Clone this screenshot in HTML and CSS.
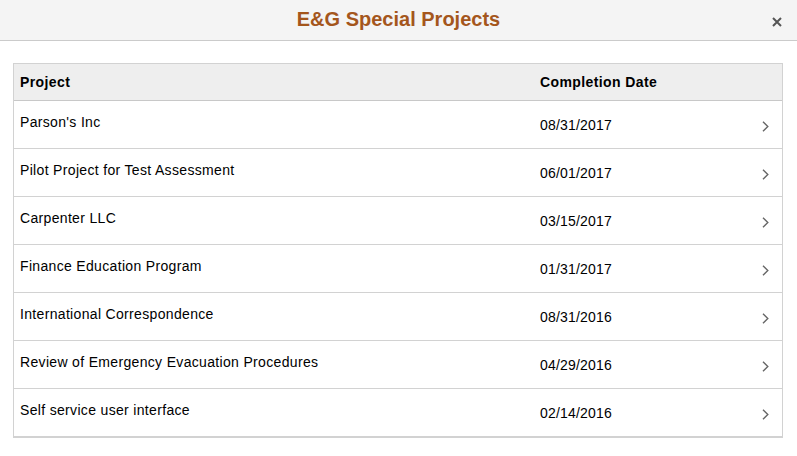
FILE: index.html
```html
<!DOCTYPE html>
<html>
<head>
<meta charset="utf-8">
<title>E&amp;G Special Projects</title>
<link rel="stylesheet" href="styles.css">
</head>
<body>
<header class="modal-header">
  <h1 class="modal-title">E&amp;G Special Projects</h1>
  <button class="close-btn" aria-label="Close">
    <svg width="10" height="10" viewBox="0 0 10 10"><path d="M1 1 L9 9 M9 1 L1 9" stroke="#555" stroke-width="2" fill="none"/></svg>
  </button>
</header>
<main class="content">
  <div class="grid">
    <div class="row head">
      <div class="cell project">Project</div>
      <div class="cell date">Completion Date</div>
      <div class="cell chev"></div>
    </div>
    <div class="row">
      <div class="cell project">Parson's Inc</div>
      <div class="cell date">08/31/2017</div>
      <div class="cell chev"><svg width="7" height="11" viewBox="0 0 7 11"><path d="M1 0.8 L5.8 5.5 L1 10.2" stroke="#666" stroke-width="1.4" fill="none"/></svg></div>
    </div>
    <div class="row">
      <div class="cell project">Pilot Project for Test Assessment</div>
      <div class="cell date">06/01/2017</div>
      <div class="cell chev"><svg width="7" height="11" viewBox="0 0 7 11"><path d="M1 0.8 L5.8 5.5 L1 10.2" stroke="#666" stroke-width="1.4" fill="none"/></svg></div>
    </div>
    <div class="row">
      <div class="cell project">Carpenter LLC</div>
      <div class="cell date">03/15/2017</div>
      <div class="cell chev"><svg width="7" height="11" viewBox="0 0 7 11"><path d="M1 0.8 L5.8 5.5 L1 10.2" stroke="#666" stroke-width="1.4" fill="none"/></svg></div>
    </div>
    <div class="row">
      <div class="cell project">Finance Education Program</div>
      <div class="cell date">01/31/2017</div>
      <div class="cell chev"><svg width="7" height="11" viewBox="0 0 7 11"><path d="M1 0.8 L5.8 5.5 L1 10.2" stroke="#666" stroke-width="1.4" fill="none"/></svg></div>
    </div>
    <div class="row">
      <div class="cell project">International Correspondence</div>
      <div class="cell date">08/31/2016</div>
      <div class="cell chev"><svg width="7" height="11" viewBox="0 0 7 11"><path d="M1 0.8 L5.8 5.5 L1 10.2" stroke="#666" stroke-width="1.4" fill="none"/></svg></div>
    </div>
    <div class="row">
      <div class="cell project">Review of Emergency Evacuation Procedures</div>
      <div class="cell date">04/29/2016</div>
      <div class="cell chev"><svg width="7" height="11" viewBox="0 0 7 11"><path d="M1 0.8 L5.8 5.5 L1 10.2" stroke="#666" stroke-width="1.4" fill="none"/></svg></div>
    </div>
    <div class="row">
      <div class="cell project">Self service user interface</div>
      <div class="cell date">02/14/2016</div>
      <div class="cell chev"><svg width="7" height="11" viewBox="0 0 7 11"><path d="M1 0.8 L5.8 5.5 L1 10.2" stroke="#666" stroke-width="1.4" fill="none"/></svg></div>
    </div>
  </div>
</main>
</body>
</html>
```

FILE: styles.css
```css
* { box-sizing: border-box; }
html, body { margin: 0; padding: 0; background: #fff; }
body {
  font-family: "Liberation Sans", Arial, sans-serif;
  font-size: 14px;
  color: #000;
}
.modal-header {
  position: relative;
  height: 41px;
  background: #f4f4f4;
  border-bottom: 1px solid #cbcbcb;
  display: flex;
  justify-content: center;
}
.modal-title {
  margin: 0;
  padding-top: 8px;
  font-size: 20px;
  font-weight: bold;
  line-height: 23px;
  color: #a4561c;
}
.close-btn {
  position: absolute;
  right: 15px;
  top: 17px;
  width: 10px;
  height: 10px;
  padding: 0;
  border: 0;
  background: none;
  display: flex;
}
.content {
  padding: 22px 14px 0 13px;
}
.grid {
  border: 1px solid #d2d2d2;
}
.row {
  display: grid;
  grid-template-columns: 526px 1fr 36px;
  height: 48px;
  border-bottom: 1px solid #d2d2d2;
}
.row.head {
  height: 37px;
  background: #eeeeee;
  border-bottom-color: #c8c8c8;
  font-weight: bold;
}
.row.head .cell { padding-top: 10px; letter-spacing: 0.4px; }
.cell { line-height: 16px; white-space: nowrap; letter-spacing: 0.33px; }
.project { padding: 13px 0 0 6px; }
.date { padding-top: 16px; letter-spacing: 0.2px; }
.chev {
  display: flex;
  justify-content: flex-end;
  align-items: flex-start;
  padding: 20px 13px 0 0;
}
```
